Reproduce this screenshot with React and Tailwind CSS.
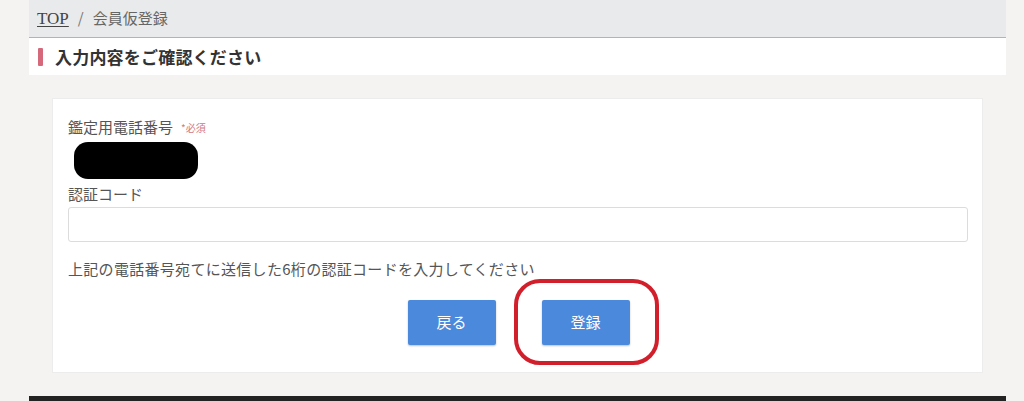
export default function App() {
  return (
    <div
      className="h-[401px] w-full overflow-hidden bg-[#f4f3f1]"
      style={{ fontFamily: '"Noto Sans CJK JP", "Liberation Serif", serif' }}
    >
      <div className="ml-[29px] w-[977px]">
        {/* breadcrumb */}
        <div className="flex h-[38px] items-center border-b border-[#b9b59c] bg-[#e8eaec] pl-[8px]">
          <span className="text-[17px] text-[#444] underline underline-offset-2" style={{ fontFamily: '"Liberation Serif", serif' }}>
            TOP
          </span>
          <span className="mx-[9px] text-[15px] text-[#777]">/</span>
          <span className="text-[15px] text-[#666]">会員仮登録</span>
        </div>

        {/* heading */}
        <div className="flex h-[37px] items-center bg-white">
          <span className="ml-[9px] h-[18px] w-[5px] rounded-[1px] bg-[#d6687c]" />
          <h1 className="ml-[12px] text-[17px] font-bold tracking-[0.2px] text-[#333]">入力内容をご確認ください</h1>
        </div>

        {/* card */}
        <div className="mt-[23px] ml-[23px] h-[275px] w-[931px] border border-[#ececec] bg-white px-[15px] pt-[18px]">
          <div className="flex h-[20px] items-center text-[15px] text-[#555]">
            鑑定用電話番号
            <span className="ml-[8px] text-[10px] text-[#d07a82]">*必須</span>
          </div>
          <div className="mt-[5px] ml-[6px] h-[37px] w-[124px] rounded-[14px] bg-black" />
          <div className="mt-[5px] text-[15px] leading-[20px] text-[#555]">認証コード</div>
          <input
            type="text"
            className="mt-[3px] h-[35px] w-[900px] rounded-[3px] border border-[#dcdcdc] bg-white px-2 outline-none"
          />
          <p className="mt-[17px] text-[15px] leading-[20px] tracking-[0.3px] text-[#555]">
            上記の電話番号宛てに送信した6桁の認証コードを入力してください
          </p>
          <div className="mt-[21px] flex justify-center gap-[46px] pl-[2px]">
            <button
              type="button"
              className="h-[45px] w-[88px] rounded-[2px] bg-[#4a89dc] text-[15px] text-white shadow-[0_1px_2px_rgba(0,0,0,0.25)]"
            >
              戻る
            </button>
            <div className="relative">
              <button
                type="button"
                className="h-[45px] w-[88px] rounded-[2px] bg-[#4a89dc] text-[15px] text-white shadow-[0_1px_2px_rgba(0,0,0,0.25)]"
              >
                登録
              </button>
              <span className="pointer-events-none absolute -top-[21px] -bottom-[20px] -left-[28px] -right-[29px] rounded-[26px] border-[4px] border-[#d21f2c]" />
            </div>
          </div>
        </div>

        {/* footer */}
        <div className="mt-[23px] h-[6px] bg-[#222]" />
      </div>
    </div>
  );
}
